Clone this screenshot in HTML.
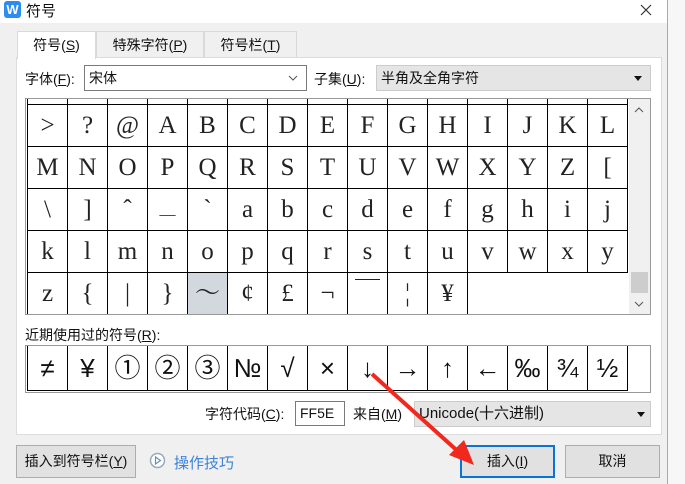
<!DOCTYPE html>
<html><head><meta charset="utf-8"><style>
*{margin:0;padding:0;box-sizing:border-box}
body{width:685px;height:484px;overflow:hidden;background:#f7f7f7;font-family:"Liberation Sans","Noto Sans CJK SC",sans-serif;font-size:14px;color:#111;position:relative}
.a{position:absolute}
.dlg{left:0;top:0;width:668px;height:484px;background:#f0f0f0;border-right:1px solid #aaa}
.title{left:0;top:0;width:667px;height:23px;background:#fff}
.panel{left:16px;top:57px;width:646px;height:378px;background:#fff;border:1px solid #dcdcdc}
.tab{top:31px;height:27px;border:1px solid #d9d9d9;border-bottom:none;background:#f0f0f0;text-align:center;line-height:27px;font-size:14px}
.cell{position:absolute;width:40px;border-right:1px solid #000;border-bottom:1px solid #000;text-align:center;font-family:"Liberation Serif","Noto Serif CJK SC",serif;font-size:25px;color:#222}
.rc{position:absolute;top:0;height:44px;width:40px;border-right:1px solid #000;text-align:center;line-height:44px;font-size:26px}
.btn{top:445px;height:33px;background:#e1e1e1;border:1px solid #adadad;text-align:center;line-height:31px;font-size:14px}
u{text-decoration:underline}
</style></head><body>
<div class="a dlg"></div>
<div class="a title"></div>
<div class="a" style="left:4px;top:1px;width:17px;height:17px;background:#2d8cf0;border-radius:3px;color:#fff;font-weight:bold;font-size:13px;line-height:17px;text-align:center">W</div>
<div class="a" style="left:26px;top:0px;font-size:15px">符号</div>
<svg class="a" style="left:640px;top:4px" width="12" height="12"><path d="M1 1L11 11M11 1L1 11" stroke="#333" stroke-width="1.2"/></svg>

<div class="a tab" style="left:96px;width:108px">特殊字符(<u>P</u>)</div>
<div class="a tab" style="left:204px;width:93px">符号栏(<u>T</u>)</div>
<div class="a panel"></div>
<div class="a tab" style="left:17px;width:79px;background:#fff;height:28px">符号(<u>S</u>)</div>

<div class="a" style="left:25px;top:69px">字体(<u>F</u>):</div>
<div class="a" style="left:84px;top:65px;width:223px;height:26px;border:1px solid #7a7a7a;background:#fff;padding-left:4px;line-height:24px">宋体</div>
<svg class="a" style="left:288px;top:74px" width="10" height="8"><path d="M1 2L5 6L9 2" stroke="#555" fill="none"/></svg>
<div class="a" style="left:314px;top:69px">子集(<u>U</u>):</div>
<div class="a" style="left:376px;top:65px;width:275px;height:26px;border:1px solid #ccc;background:#e5e5e5;padding-left:4px;line-height:24px">半角及全角字符</div>
<svg class="a" style="left:634px;top:76px" width="8" height="5"><path d="M0 0H8L4 5Z" fill="#111"/></svg>

<div class="a" style="left:25px;top:98px;width:626px;height:217px;border:1px solid #999;background:#fff;overflow:hidden">
<div id="g" class="a" style="left:1px;top:-36px;width:601px;height:251px;border-left:1px solid #000">
</div>
<div class="a" style="left:603px;top:0;width:21px;height:215px;background:#f0f0f0"></div>
<div class="a" style="left:605px;top:173px;width:17px;height:21px;background:#cdcdcd"></div>
<svg class="a" style="left:608px;top:8px" width="10" height="6"><path d="M1 5L5 1L9 5" stroke="#555" fill="none"/></svg>
<svg class="a" style="left:608px;top:202px" width="10" height="6"><path d="M1 1L5 5L9 1" stroke="#555" fill="none"/></svg>
</div>

<div class="a" style="left:25px;top:325px">近期使用过的符号(<u>R</u>):</div>
<div class="a" style="left:25px;top:345px;width:626px;height:48px;border:1px solid #999;background:#fff">
<div class="a" style="left:1px;top:0;width:601px;height:45px;border-left:1px solid #000;border-bottom:1px solid #000" id="r"></div>
</div>

<div class="a" style="left:205px;top:404px">字符代码(<u>C</u>):</div>
<div class="a" style="left:295px;top:401px;width:50px;height:25px;border:1px solid #7a7a7a;background:#fff;padding-left:4px;line-height:23px">FF5E</div>
<div class="a" style="left:353px;top:404px">来自(<u>M</u>)</div>
<div class="a" style="left:414px;top:401px;width:237px;height:26px;border:1px solid #ccc;background:#e5e5e5;padding-left:4px;line-height:24px;font-size:15px">Unicode(十六进制)</div>
<svg class="a" style="left:637px;top:412px" width="8" height="5"><path d="M0 0H8L4 5Z" fill="#111"/></svg>

<div class="a btn" style="left:16px;width:120px">插入到符号栏(<u>Y</u>)</div>
<svg class="a" style="left:149px;top:452px" width="17" height="17"><circle cx="8.5" cy="8.5" r="7" fill="#fff" stroke="#9ab" stroke-width="1.5"/><path d="M6.5 5L11.5 8.5L6.5 12Z" fill="none" stroke="#6a8fb5" stroke-width="1.2"/></svg>
<div class="a" style="left:174px;top:452px;color:#3c82d8;font-size:15px">操作技巧</div>
<div class="a btn" style="left:460px;width:95px;border:2px solid #0a74d6;line-height:29px">插入(<u>I</u>)</div>
<div class="a btn" style="left:565px;width:95px">取消</div>

<svg class="a" style="left:0;top:0" width="685" height="484"><path d="M372 374L462 455" stroke="#f0281e" stroke-width="4"/><path d="M474 465L449 455L464 440Z" fill="#f0281e"/></svg>

<script>
var rows=[["","","","","","","","","","","","","","",""],[">","?","@","A","B","C","D","E","F","G","H","I","J","K","L"],["M","N","O","P","Q","R","S","T","U","V","W","X","Y","Z","["],["\\","]","ˆ","__","`","a","b","c","d","e","f","g","h","i","j"],["k","l","m","n","o","p","q","r","s","t","u","v","w","x","y"],["z","{","|","}","～","¢","£","¬","￣","¦","¥","","","",""]];
var g=document.getElementById('g'),h='';
var tops=[0,42,84,126,168,210],hs=[42,42,42,42,42,42];
for(var r=0;r<6;r++)for(var c=0;c<15;c++){if(r==5&&c>10)continue;var s=rows[r][c];var bg=(r==5&&c==4)?'background:#d3d8de;':'';
var st='';if(s=="__")st='font-size:16px;';
h+='<div class="cell" style="'+bg+st+'left:'+(c*40)+'px;top:'+tops[r]+'px;height:'+hs[r]+'px;line-height:'+hs[r]+'px">'+s.replace('<','&lt;')+'</div>';}
g.innerHTML=h;
var rc=["≠","¥","①","②","③","№","√","×","↓","→","↑","←","‰","¾","½"],t='';
for(var i=0;i<15;i++)t+='<div class="rc" style="left:'+(i*40)+'px">'+rc[i]+'</div>';
document.getElementById('r').innerHTML=t;
</script>
</body></html>
